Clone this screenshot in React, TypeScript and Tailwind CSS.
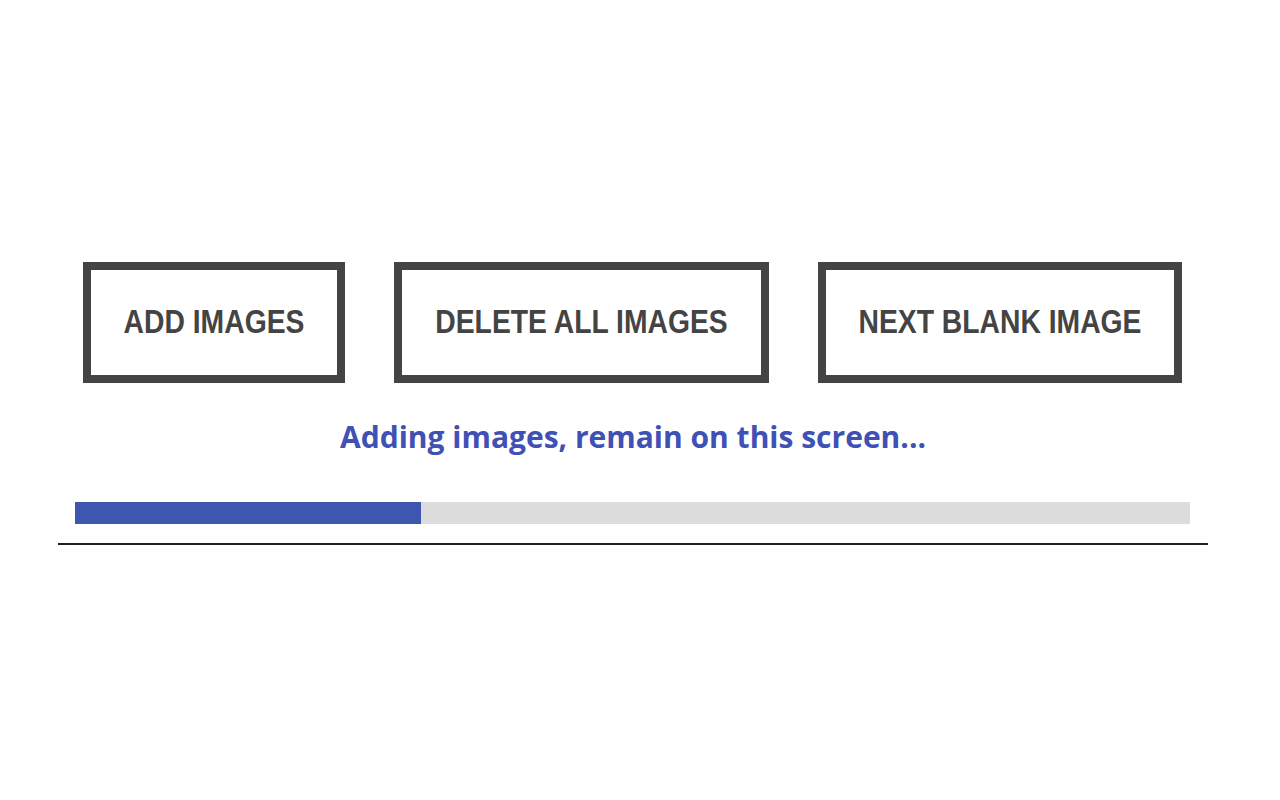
import React from 'react'

const buttons = [
  { label: 'ADD IMAGES', width: 'w-[262px]' },
  { label: 'DELETE ALL IMAGES', width: 'w-[375px]' },
  { label: 'NEXT BLANK IMAGE', width: 'w-[364px]' },
]

const App = () => {
  return (
    <div className="w-[1280px] h-[800px] bg-white">
      <div className="ml-[58px] w-[1150px] pt-[262px]">
        <div className="flex gap-[49px] pl-[25px]">
          {buttons.map((b) => (
            <button
              key={b.label}
              className={`${b.width} h-[121px] border-[8px] border-[#444444] bg-white text-center text-[28.3px] font-bold text-[#444444] font-['Liberation_Sans',Arial,sans-serif]`}
            >
              <span className="inline-block scale-y-[1.15]">{b.label}</span>
            </button>
          ))}
        </div>
        <p className="mt-[34px] text-center text-[30px] leading-[40px] font-bold text-[#3f51b5] font-['Open_Sans',sans-serif]">
          Adding images, remain on this screen...
        </p>
        <div className="mt-[45px] ml-[17px] w-[1115px] h-[22px] bg-[#dcdcdc]">
          <div className="h-full w-[31%] bg-[#3f56b0]" />
        </div>
        <div className="mt-[19px] h-[2px] bg-[#222222]" />
      </div>
    </div>
  )
}

export default App
